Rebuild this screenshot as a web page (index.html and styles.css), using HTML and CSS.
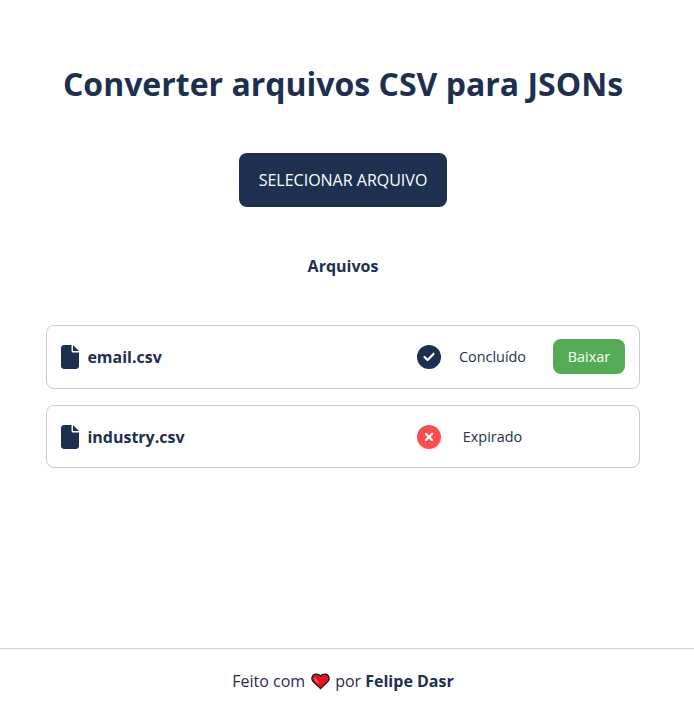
FILE: index.html
```html
<!DOCTYPE html>
<html lang="pt-BR">
<head>
<meta charset="utf-8">
<title>Converter arquivos CSV para JSONs</title>
<link rel="stylesheet" href="styles.css">
</head>
<body>
<main class="content">
  <h1 class="title">Converter arquivos CSV para JSONs</h1>
  <button class="select">SELECIONAR ARQUIVO</button>
  <h2 class="subtitle">Arquivos</h2>
  <ul class="files">
    <li class="file">
      <svg class="file-icon" viewBox="0 0 384 512"><path d="M0 64C0 28.700 28.700 0 64 0H224V128c0 17.700 14.300 32 32 32H384V448c0 35.300-28.700 64-64 64H64c-35.300 0-64-28.700-64-64V64zm384 64H256V0L384 128z"/></svg>
      <span class="name">email.csv</span>
      <svg class="status-icon done" viewBox="0 0 512 512"><path d="M256 512A256 256 0 1 0 256 0a256 256 0 1 0 0 512zM369 209L241 337c-9.400 9.400-24.600 9.400-33.900 0l-64-64c-9.400-9.400-9.400-24.600 0-33.900s24.600-9.400 33.900 0l47 47L335 175c9.400-9.400 24.600-9.400 33.900 0s9.400 24.600 0 33.900z"/></svg>
      <span class="status">Concluído</span>
      <button class="download">Baixar</button>
    </li>
    <li class="file">
      <svg class="file-icon" viewBox="0 0 384 512"><path d="M0 64C0 28.700 28.700 0 64 0H224V128c0 17.700 14.300 32 32 32H384V448c0 35.300-28.700 64-64 64H64c-35.300 0-64-28.700-64-64V64zm384 64H256V0L384 128z"/></svg>
      <span class="name">industry.csv</span>
      <svg class="status-icon expired" viewBox="0 0 512 512"><path d="M256 512A256 256 0 1 0 256 0a256 256 0 1 0 0 512zM175 175c9.400-9.400 24.600-9.400 33.900 0l47 47 47-47c9.400-9.400 24.600-9.400 33.900 0s9.400 24.600 0 33.900l-47 47 47 47c9.400 9.400 9.400 24.600 0 33.900s-24.600 9.400-33.900 0l-47-47-47 47c-9.400 9.400-24.600 9.400-33.900 0s-9.400-24.600 0-33.900l47-47-47-47c-9.400-9.400-9.400-24.600 0-33.900z"/></svg>
      <span class="status">Expirado</span>
    </li>
  </ul>
</main>
<footer class="footer">
  <span>Feito com</span>
  <svg class="heart" viewBox="0 0 20 18"><path d="M10 16.500 2.200 9C-.5 6.100 1.400 1.200 5.300 1.200c2 0 3.600.5 4.700 1.800 1.100-1.300 2.700-1.800 4.700-1.800 3.900 0 5.800 4.900 3.100 7.800Z"/><path class="shine" d="M4 5.500C4.600 7.600 6 9.200 7.500 10.300"/></svg>
  <span>por <strong>Felipe Dasr</strong></span>
</footer>
</body>
</html>
```
FILE: styles.css
```css
* { box-sizing: border-box; }
body { margin: 0; height: 723px; display: flex; flex-direction: column; background: #fff; color: #1d3050; font-family: "Open Sans", sans-serif; font-size: 16px; }
.content { flex: 1; width: 594px; margin-left: 46px; display: flex; flex-direction: column; align-items: center; }
.title { margin: 62px 0 0; font-size: 32px; line-height: 44px; font-weight: 700; white-space: nowrap; }
button { font-family: inherit; border: 0; color: #fff; }
.select { margin-top: 47px; width: 208px; height: 54px; padding: 0; border-radius: 8px; background: #1d3050; font-size: 16px; }
.subtitle { margin: 48px 0 0; font-size: 16px; line-height: 22px; }
.files { list-style: none; margin: 48px 0 0; padding: 0; width: 100%; display: grid; gap: 16px; }
.file { height: 64px; padding: 0 14px; border: 1px solid #ccc; border-radius: 8px; display: grid; grid-template-columns: 18px 1fr 24px 103px 81px; align-items: center; }
.file + .file { height: 63px; }
.file-icon { width: 18px; height: 24px; fill: #1d3050; }
.name { padding-left: 8.4px; font-weight: 700; }
.status-icon { width: 24px; height: 24px; }
.done { fill: #1d3050; }
.expired { fill: #ff4d4f; }
.status { text-align: center; font-size: 14.4px; line-height: 20px; }
.download { margin: 0 0 1px 9px; width: 72px; height: 35px; padding: 0; border-radius: 8px; background: #55aa55; font-size: 14.4px; }
.footer { height: 75px; padding: 0 8px 10px 0; border-top: 1px solid #d5d5d5; display: flex; align-items: center; justify-content: center; }
.heart { width: 19px; height: 17px; margin: 0 5px 0 6px; fill: #e81224; stroke: #111; stroke-width: 1.300; }
.shine { fill: none; stroke: #f97a68; stroke-linecap: round; }
```
